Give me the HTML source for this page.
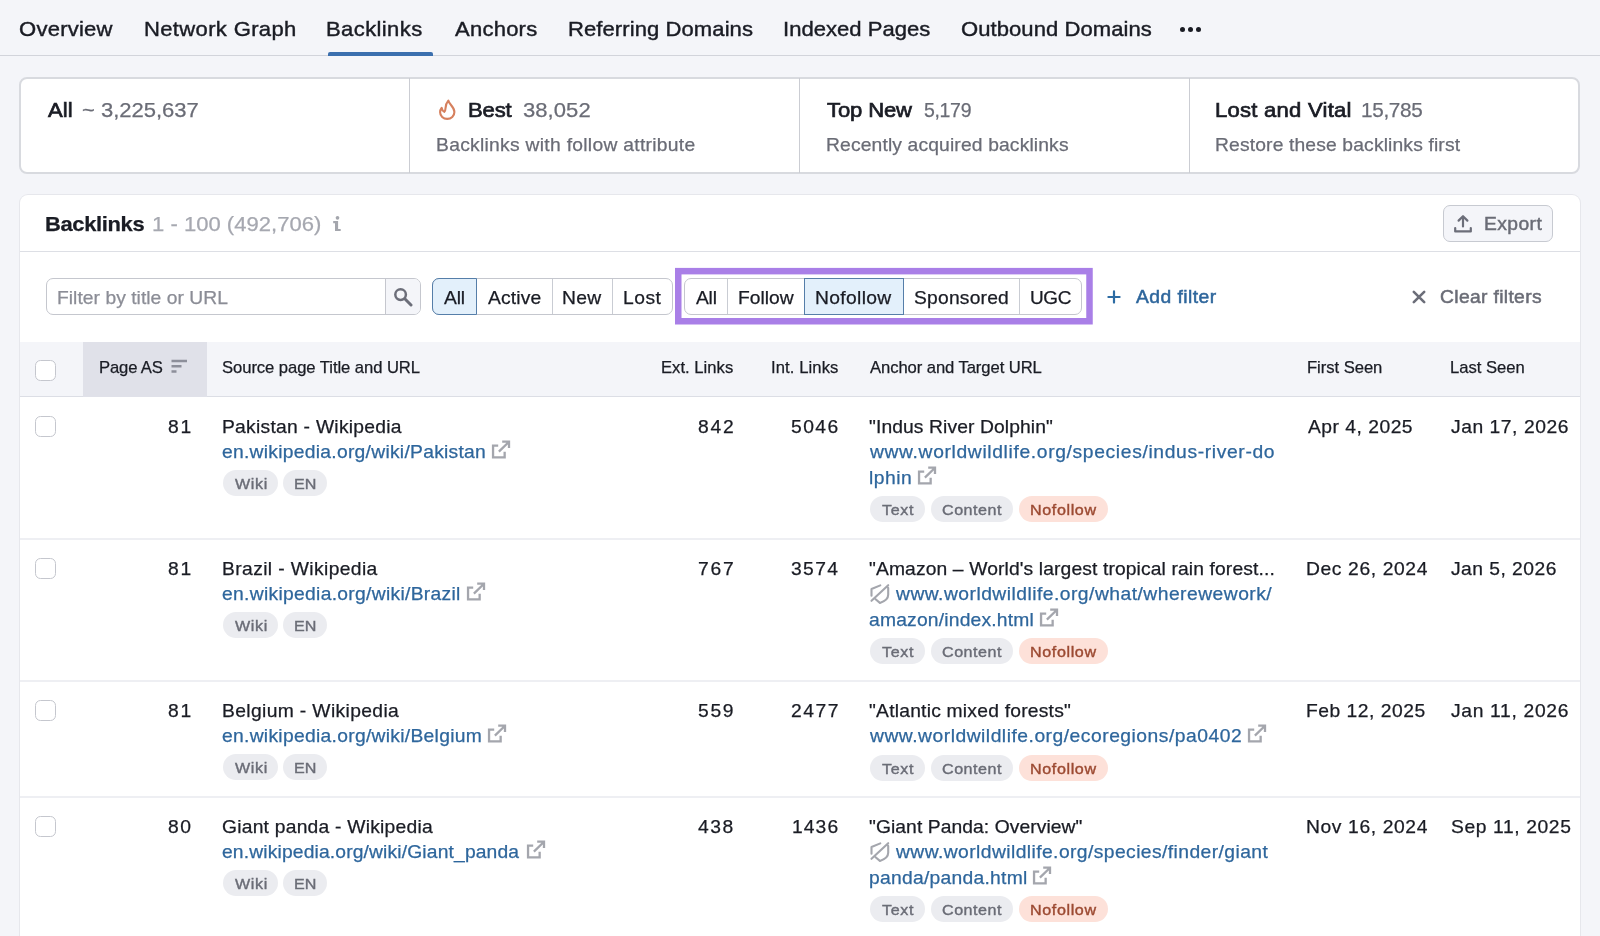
<!DOCTYPE html>
<html><head><meta charset="utf-8"><title>Backlinks</title>
<style>
html,body{margin:0;padding:0}
body{width:1600px;height:936px;overflow:hidden;background:#f4f5f9;font-family:"Liberation Sans",sans-serif;position:relative}
#root{position:absolute;left:0;top:0;width:1600px;height:936px;overflow:hidden;will-change:transform}
#root div,#root svg,#root span{position:absolute}
.t{white-space:pre;line-height:1;transform-origin:0 0}
</style></head><body><div id="root">
<div style="left:0;top:55px;width:1600px;height:1px;background:#d2d4db"></div>
<div style="left:327.5px;top:52px;width:105.5px;height:4px;background:#3b6fae;border-radius:2px 2px 0 0"></div>
<div style="left:1179.5px;top:26.5px;width:5px;height:5px;border-radius:50%;background:#1a1c24"></div>
<div style="left:1187.5px;top:26.5px;width:5px;height:5px;border-radius:50%;background:#1a1c24"></div>
<div style="left:1195.5px;top:26.5px;width:5px;height:5px;border-radius:50%;background:#1a1c24"></div>
<div style="left:19px;top:77px;width:1561px;height:97px;box-sizing:border-box;background:#fff;border:2px solid #d8dadf;border-radius:8px"></div>
<div style="left:409px;top:78px;width:1px;height:95px;background:#cbcdd3"></div>
<div style="left:799px;top:78px;width:1px;height:95px;background:#cbcdd3"></div>
<div style="left:1189px;top:78px;width:1px;height:95px;background:#cbcdd3"></div>
<svg style="left:437px;top:98px" width="22" height="24" viewBox="0 0 22 24" fill="none" stroke="#d6805e" stroke-width="2.1" stroke-linecap="round" stroke-linejoin="round"><path d="M11.300 2.600C12.200 6.400 17.400 8.800 17.400 14 17.400 18 14.200 20.900 10.200 20.900 6.200 20.900 3.100 18 3.100 14.200 3.100 12.400 3.700 10.900 4.600 9.800 5 11.800 5.900 13.300 7.300 13.900 9.800 12.200 6.800 7.600 11.300 2.600Z"/></svg>
<div style="left:20px;top:195px;width:1560px;height:760px;background:#fff;border-radius:8px;box-shadow:0 0 0 1px #e6e7ec"></div>
<div style="left:20px;top:251px;width:1560px;height:1px;background:#dddfe5"></div>
<svg style="left:330px;top:214px" width="14" height="20" viewBox="330 214 14 20" fill="#a4a6ad"><circle cx="337.500" cy="217.800" r="1.850"/><path d="M333.200 221.100h4.900v7.900h2.600v2.100h-5.700v-7.900h-1.800z"/></svg>
<div style="left:1443px;top:205px;width:110px;height:37px;box-sizing:border-box;background:#f4f5f9;border:1.5px solid #c7cad1;border-radius:7px"></div>
<svg style="left:1453px;top:214px" width="20" height="20" viewBox="0 0 20 20" fill="none" stroke="#6c6e79" stroke-width="2.2" stroke-linecap="round" stroke-linejoin="round"><path d="M10 12.500V2.600M5.600 6.600 10 2.200l4.400 4.400M2.200 14v3.400h15.600V14"/></svg>
<div style="left:45.500px;top:278px;width:375.500px;height:37px;box-sizing:border-box;background:#fff;border:1.5px solid #c5c7ce;border-radius:7px;overflow:hidden"><div style="left:338px;top:0;width:40px;height:40px;background:#f4f5f9;border-left:1.5px solid #c5c7ce"></div></div>
<svg style="left:393px;top:286.800px" width="20" height="20" viewBox="0 0 20 20" fill="none" stroke="#6c6e79" stroke-width="2.500" stroke-linecap="round"><circle cx="7.600" cy="7.600" r="5.300"/><path d="M11.800 11.800 18 18" stroke-width="3"/></svg>
<div style="left:432px;top:278px;width:240.5px;height:37px;box-sizing:border-box;background:#fff;border:1.5px solid #c5c7ce;border-radius:7px"></div>
<div style="left:552px;top:279px;width:1px;height:35px;background:#c9ccd3"></div>
<div style="left:612px;top:279px;width:1px;height:35px;background:#c9ccd3"></div>
<div style="left:432px;top:278px;width:44.5px;height:37px;box-sizing:border-box;background:#e3f0fb;border:1.5px solid #557ea9;border-radius:7px 0 0 7px"></div>
<svg style="left:670px;top:262px" width="430" height="70" viewBox="670 262 430 70" fill="none"><rect x="678.250" y="271.150" width="411.250" height="50.100" stroke="#a97fe7" stroke-width="6.500"/></svg>
<div style="left:683.7px;top:278px;width:398.79999999999995px;height:37px;box-sizing:border-box;background:#fff;border:1.5px solid #c5c7ce;border-radius:7px"></div>
<div style="left:727px;top:279px;width:1px;height:35px;background:#c9ccd3"></div>
<div style="left:1019px;top:279px;width:1px;height:35px;background:#c9ccd3"></div>
<div style="left:804.2px;top:278px;width:99.79999999999995px;height:37px;box-sizing:border-box;background:#e3f0fb;border:1.5px solid #557ea9;border-radius:0"></div>
<svg style="left:1106px;top:289px" width="16" height="16" viewBox="0 0 16 16" stroke="#2c6ba3" stroke-width="2.200" stroke-linecap="round"><path d="M8 2.400v11.200M2.400 8h11.200"/></svg>
<svg style="left:1411px;top:289px" width="16" height="16" viewBox="0 0 16 16" stroke="#6c6e79" stroke-width="2.600" stroke-linecap="round"><path d="M2.800 2.800l10.400 10.400M13.200 2.800l-10.400 10.400"/></svg>
<div style="left:20px;top:341.500px;width:1560px;height:55px;background:#f4f5f9;border-bottom:1.5px solid #dcdee5;box-sizing:border-box"></div>
<div style="left:83px;top:341.500px;width:124px;height:55px;background:#e0e1e9"></div>
<svg style="left:170px;top:358px" width="18" height="16" viewBox="0 0 18 16" stroke="#8d8f9a" stroke-width="2.500" stroke-linecap="butt"><path d="M1.500 3h15.500M1.500 8.200h10M1.500 13.400h5"/></svg>
<div style="left:35px;top:359.5px;width:21px;height:21px;box-sizing:border-box;background:#fff;border:1.500px solid #c5c7ce;border-radius:5.500px"></div>
<div style="left:35px;top:416px;width:21px;height:21px;box-sizing:border-box;background:#fff;border:1.500px solid #c5c7ce;border-radius:5.500px"></div>
<svg style="left:491px;top:438.90000000000003px" width="21" height="22" viewBox="0 0 21 22" fill="none" stroke="#a4a6ad" stroke-width="2.300" stroke-linejoin="miter"><path d="M7.200 6.550H2.050V18.450H13.650V12.700M11.200 2.700H18V9M18 2.700 7.900 12.600"/></svg>
<div style="left:222.5px;top:470.40000000000003px;width:55.0px;height:26px;border-radius:13px;background:#ebecf0"></div>
<div style="left:283.2px;top:470.40000000000003px;width:44.30000000000001px;height:26px;border-radius:13px;background:#ebecf0"></div>
<svg style="left:916.5px;top:464.90000000000003px" width="21" height="22" viewBox="0 0 21 22" fill="none" stroke="#a4a6ad" stroke-width="2.300" stroke-linejoin="miter"><path d="M7.200 6.550H2.050V18.450H13.650V12.700M11.200 2.700H18V9M18 2.700 7.900 12.600"/></svg>
<div style="left:870px;top:496.40000000000003px;width:54.5px;height:26px;border-radius:13px;background:#ebecf0"></div>
<div style="left:930.5px;top:496.40000000000003px;width:82.5px;height:26px;border-radius:13px;background:#ebecf0"></div>
<div style="left:1019px;top:496.40000000000003px;width:88.79999999999995px;height:26px;border-radius:13px;background:#fde1d9"></div>
<div style="left:20px;top:538px;width:1560px;height:2px;background:#eeeff3"></div>
<div style="left:35px;top:558px;width:21px;height:21px;box-sizing:border-box;background:#fff;border:1.500px solid #c5c7ce;border-radius:5.500px"></div>
<svg style="left:465.5px;top:580.9px" width="21" height="22" viewBox="0 0 21 22" fill="none" stroke="#a4a6ad" stroke-width="2.300" stroke-linejoin="miter"><path d="M7.200 6.550H2.050V18.450H13.650V12.700M11.200 2.700H18V9M18 2.700 7.900 12.600"/></svg>
<div style="left:222.5px;top:612.4px;width:55.0px;height:26px;border-radius:13px;background:#ebecf0"></div>
<div style="left:283.2px;top:612.4px;width:44.30000000000001px;height:26px;border-radius:13px;background:#ebecf0"></div>
<svg style="left:869px;top:582.9px" width="22" height="23" viewBox="0 0 22 23" fill="none" stroke="#a4a6ad" stroke-width="2.100" stroke-linecap="round" stroke-linejoin="round"><path d="M11.300 2.400 2.500 6V12.800M19.200 4.900V11.800C19.200 15.800 15 18.600 10.900 19.900L6.600 16.200M19.200 2.200 2.500 17.800"/></svg>
<svg style="left:1039px;top:606.9px" width="21" height="22" viewBox="0 0 21 22" fill="none" stroke="#a4a6ad" stroke-width="2.300" stroke-linejoin="miter"><path d="M7.200 6.550H2.050V18.450H13.650V12.700M11.200 2.700H18V9M18 2.700 7.900 12.600"/></svg>
<div style="left:870px;top:638.4px;width:54.5px;height:26px;border-radius:13px;background:#ebecf0"></div>
<div style="left:930.5px;top:638.4px;width:82.5px;height:26px;border-radius:13px;background:#ebecf0"></div>
<div style="left:1019px;top:638.4px;width:88.79999999999995px;height:26px;border-radius:13px;background:#fde1d9"></div>
<div style="left:20px;top:680px;width:1560px;height:2px;background:#eeeff3"></div>
<div style="left:35px;top:700px;width:21px;height:21px;box-sizing:border-box;background:#fff;border:1.500px solid #c5c7ce;border-radius:5.500px"></div>
<svg style="left:487px;top:722.9px" width="21" height="22" viewBox="0 0 21 22" fill="none" stroke="#a4a6ad" stroke-width="2.300" stroke-linejoin="miter"><path d="M7.200 6.550H2.050V18.450H13.650V12.700M11.200 2.700H18V9M18 2.700 7.900 12.600"/></svg>
<div style="left:222.5px;top:754.4px;width:55.0px;height:26px;border-radius:13px;background:#ebecf0"></div>
<div style="left:283.2px;top:754.4px;width:44.30000000000001px;height:26px;border-radius:13px;background:#ebecf0"></div>
<svg style="left:1247px;top:722.9px" width="21" height="22" viewBox="0 0 21 22" fill="none" stroke="#a4a6ad" stroke-width="2.300" stroke-linejoin="miter"><path d="M7.200 6.550H2.050V18.450H13.650V12.700M11.200 2.700H18V9M18 2.700 7.900 12.600"/></svg>
<div style="left:870px;top:754.9px;width:54.5px;height:26px;border-radius:13px;background:#ebecf0"></div>
<div style="left:930.5px;top:754.9px;width:82.5px;height:26px;border-radius:13px;background:#ebecf0"></div>
<div style="left:1019px;top:754.9px;width:88.79999999999995px;height:26px;border-radius:13px;background:#fde1d9"></div>
<div style="left:20px;top:796px;width:1560px;height:2px;background:#eeeff3"></div>
<div style="left:35px;top:816px;width:21px;height:21px;box-sizing:border-box;background:#fff;border:1.500px solid #c5c7ce;border-radius:5.500px"></div>
<svg style="left:525.5px;top:838.9px" width="21" height="22" viewBox="0 0 21 22" fill="none" stroke="#a4a6ad" stroke-width="2.300" stroke-linejoin="miter"><path d="M7.200 6.550H2.050V18.450H13.650V12.700M11.200 2.700H18V9M18 2.700 7.900 12.600"/></svg>
<div style="left:222.5px;top:870.4px;width:55.0px;height:26px;border-radius:13px;background:#ebecf0"></div>
<div style="left:283.2px;top:870.4px;width:44.30000000000001px;height:26px;border-radius:13px;background:#ebecf0"></div>
<svg style="left:869px;top:840.9px" width="22" height="23" viewBox="0 0 22 23" fill="none" stroke="#a4a6ad" stroke-width="2.100" stroke-linecap="round" stroke-linejoin="round"><path d="M11.300 2.400 2.500 6V12.800M19.200 4.900V11.800C19.200 15.800 15 18.600 10.900 19.900L6.600 16.200M19.200 2.200 2.500 17.800"/></svg>
<svg style="left:1032px;top:864.9px" width="21" height="22" viewBox="0 0 21 22" fill="none" stroke="#a4a6ad" stroke-width="2.300" stroke-linejoin="miter"><path d="M7.200 6.550H2.050V18.450H13.650V12.700M11.200 2.700H18V9M18 2.700 7.900 12.600"/></svg>
<div style="left:870px;top:896.4px;width:54.5px;height:26px;border-radius:13px;background:#ebecf0"></div>
<div style="left:930.5px;top:896.4px;width:82.5px;height:26px;border-radius:13px;background:#ebecf0"></div>
<div style="left:1019px;top:896.4px;width:88.79999999999995px;height:26px;border-radius:13px;background:#fde1d9"></div>
<span class="t" style="left:19.18px;top:19.39px;font-size:20.8px;color:#1a1c24;letter-spacing:0.225px;transform:scaleX(1.0600);-webkit-text-stroke:0.42px #1a1c24">Overview</span>
<span class="t" style="left:144.41px;top:19.39px;font-size:20.8px;color:#1a1c24;letter-spacing:0.318px;transform:scaleX(1.0600);-webkit-text-stroke:0.42px #1a1c24">Network Graph</span>
<span class="t" style="left:326.41px;top:19.39px;font-size:20.8px;color:#1a1c24;letter-spacing:0.359px;transform:scaleX(1.0600);-webkit-text-stroke:0.42px #1a1c24">Backlinks</span>
<span class="t" style="left:454.88px;top:19.39px;font-size:20.8px;color:#1a1c24;letter-spacing:0.208px;transform:scaleX(1.0600);-webkit-text-stroke:0.42px #1a1c24">Anchors</span>
<span class="t" style="left:567.81px;top:19.39px;font-size:20.8px;color:#1a1c24;letter-spacing:0.070px;transform:scaleX(1.0600);-webkit-text-stroke:0.42px #1a1c24">Referring Domains</span>
<span class="t" style="left:782.59px;top:19.39px;font-size:20.8px;color:#1a1c24;letter-spacing:0.023px;transform:scaleX(1.0600);-webkit-text-stroke:0.42px #1a1c24">Indexed Pages</span>
<span class="t" style="left:961.38px;top:19.39px;font-size:20.8px;color:#1a1c24;letter-spacing:0.053px;transform:scaleX(1.0600);-webkit-text-stroke:0.42px #1a1c24">Outbound Domains</span>
<span class="t" style="left:47.83px;top:100.39px;font-size:20.8px;color:#1a1c24;letter-spacing:0.124px;transform:scaleX(1.0600);-webkit-text-stroke:0.7px #1a1c24">All</span>
<span class="t" style="left:82.14px;top:100.39px;font-size:20.8px;color:#6a6c76;letter-spacing:-0.023px;transform:scaleX(1.0600);-webkit-text-stroke:0.25px #6a6c76">~ 3,225,637</span>
<span class="t" style="left:467.56px;top:100.39px;font-size:20.8px;color:#1a1c24;letter-spacing:-0.124px;transform:scaleX(1.0600);-webkit-text-stroke:0.7px #1a1c24">Best</span>
<span class="t" style="left:522.79px;top:100.39px;font-size:20.8px;color:#6a6c76;letter-spacing:0.049px;transform:scaleX(1.0600);-webkit-text-stroke:0.25px #6a6c76">38,052</span>
<span class="t" style="left:435.55px;top:135.59px;font-size:18.2px;color:#6a6c76;letter-spacing:0.265px;transform:scaleX(1.0600);-webkit-text-stroke:0.25px #6a6c76">Backlinks with follow attribute</span>
<span class="t" style="left:827.38px;top:100.39px;font-size:20.8px;color:#1a1c24;letter-spacing:-0.122px;transform:scaleX(1.0600);-webkit-text-stroke:0.7px #1a1c24">Top New</span>
<span class="t" style="left:924.34px;top:100.39px;font-size:20.8px;color:#6a6c76;letter-spacing:-0.350px;transform:scaleX(0.9373);-webkit-text-stroke:0.25px #6a6c76">5,179</span>
<span class="t" style="left:826.05px;top:135.59px;font-size:18.2px;color:#6a6c76;letter-spacing:0.129px;transform:scaleX(1.0600);-webkit-text-stroke:0.25px #6a6c76">Recently acquired backlinks</span>
<span class="t" style="left:1215.26px;top:100.39px;font-size:20.8px;color:#1a1c24;letter-spacing:0.236px;transform:scaleX(1.0600);-webkit-text-stroke:0.7px #1a1c24">Lost and Vital</span>
<span class="t" style="left:1360.54px;top:100.39px;font-size:20.8px;color:#6a6c76;letter-spacing:-0.350px;transform:scaleX(0.9975);-webkit-text-stroke:0.25px #6a6c76">15,785</span>
<span class="t" style="left:1215.25px;top:135.59px;font-size:18.2px;color:#6a6c76;letter-spacing:0.134px;transform:scaleX(1.0600);-webkit-text-stroke:0.25px #6a6c76">Restore these backlinks first</span>
<span class="t" style="left:44.66px;top:213.89px;font-size:20.8px;color:#1a1c24;letter-spacing:-0.350px;transform:scaleX(1.0560);font-weight:700;-webkit-text-stroke:0.25px #1a1c24">Backlinks</span>
<span class="t" style="left:152.45px;top:213.89px;font-size:20.8px;color:#a6a8b0;letter-spacing:0.009px;transform:scaleX(1.0600);-webkit-text-stroke:0.25px #a6a8b0">1 - 100 (492,706)</span>
<span class="t" style="left:1483.66px;top:215.09px;font-size:18.2px;color:#6a6c76;letter-spacing:0.380px;transform:scaleX(1.0600);-webkit-text-stroke:0.45px #6a6c76">Export</span>
<span class="t" style="left:56.55px;top:288.79px;font-size:18.2px;color:#8b8d96;letter-spacing:0.028px;transform:scaleX(1.0600);-webkit-text-stroke:0.25px #8b8d96">Filter by title or URL</span>
<span class="t" style="left:444.09px;top:288.79px;font-size:18.2px;color:#1a1c24;letter-spacing:-0.174px;transform:scaleX(1.0600);-webkit-text-stroke:0.25px #1a1c24">All</span>
<span class="t" style="left:487.59px;top:288.79px;font-size:18.2px;color:#1a1c24;letter-spacing:0.118px;transform:scaleX(1.0600);-webkit-text-stroke:0.25px #1a1c24">Active</span>
<span class="t" style="left:562.25px;top:288.79px;font-size:18.2px;color:#1a1c24;letter-spacing:0.234px;transform:scaleX(1.0600);-webkit-text-stroke:0.25px #1a1c24">New</span>
<span class="t" style="left:623.05px;top:288.79px;font-size:18.2px;color:#1a1c24;letter-spacing:0.473px;transform:scaleX(1.0600);-webkit-text-stroke:0.25px #1a1c24">Lost</span>
<span class="t" style="left:695.79px;top:288.79px;font-size:18.2px;color:#1a1c24;letter-spacing:-0.221px;transform:scaleX(1.0600);-webkit-text-stroke:0.25px #1a1c24">All</span>
<span class="t" style="left:737.65px;top:288.79px;font-size:18.2px;color:#1a1c24;letter-spacing:-0.028px;transform:scaleX(1.0600);-webkit-text-stroke:0.25px #1a1c24">Follow</span>
<span class="t" style="left:815.05px;top:288.79px;font-size:18.2px;color:#1a1c24;letter-spacing:0.315px;transform:scaleX(1.0600);-webkit-text-stroke:0.25px #1a1c24">Nofollow</span>
<span class="t" style="left:914.26px;top:288.79px;font-size:18.2px;color:#1a1c24;letter-spacing:0.188px;transform:scaleX(1.0600);-webkit-text-stroke:0.25px #1a1c24">Sponsored</span>
<span class="t" style="left:1029.67px;top:288.79px;font-size:18.2px;color:#1a1c24;letter-spacing:-0.350px;transform:scaleX(1.0429);-webkit-text-stroke:0.25px #1a1c24">UGC</span>
<span class="t" style="left:1135.53px;top:288.39px;font-size:18.2px;color:#2e669c;letter-spacing:0.423px;transform:scaleX(1.0600);-webkit-text-stroke:0.5px #2e669c">Add filter</span>
<span class="t" style="left:1439.89px;top:288.39px;font-size:18.2px;color:#6a6c76;letter-spacing:0.319px;transform:scaleX(1.0600);-webkit-text-stroke:0.5px #6a6c76">Clear filters</span>
<span class="t" style="left:98.77px;top:360.41px;font-size:15.7px;color:#1a1c24;letter-spacing:-0.136px;transform:scaleX(1.0600);-webkit-text-stroke:0.25px #1a1c24">Page AS</span>
<span class="t" style="left:222.38px;top:360.41px;font-size:15.7px;color:#1a1c24;letter-spacing:-0.064px;transform:scaleX(1.0600);-webkit-text-stroke:0.25px #1a1c24">Source page Title and URL</span>
<span class="t" style="left:661.27px;top:360.41px;font-size:15.7px;color:#1a1c24;letter-spacing:0.011px;transform:scaleX(1.0600);-webkit-text-stroke:0.25px #1a1c24">Ext. Links</span>
<span class="t" style="left:770.60px;top:360.41px;font-size:15.7px;color:#1a1c24;letter-spacing:0.086px;transform:scaleX(1.0600);-webkit-text-stroke:0.25px #1a1c24">Int. Links</span>
<span class="t" style="left:870.10px;top:360.41px;font-size:15.7px;color:#1a1c24;letter-spacing:-0.078px;transform:scaleX(1.0600);-webkit-text-stroke:0.25px #1a1c24">Anchor and Target URL</span>
<span class="t" style="left:1306.57px;top:360.41px;font-size:15.7px;color:#1a1c24;letter-spacing:-0.043px;transform:scaleX(1.0600);-webkit-text-stroke:0.25px #1a1c24">First Seen</span>
<span class="t" style="left:1450.27px;top:360.41px;font-size:15.7px;color:#1a1c24;letter-spacing:-0.025px;transform:scaleX(1.0600);-webkit-text-stroke:0.25px #1a1c24">Last Seen</span>
<span class="t" style="left:167.59px;top:417.69px;font-size:18.2px;color:#1a1c24;letter-spacing:1.667px;transform:scaleX(1.0600);-webkit-text-stroke:0.25px #1a1c24">81</span>
<span class="t" style="left:221.55px;top:417.69px;font-size:18.2px;color:#1a1c24;letter-spacing:0.242px;transform:scaleX(1.0600);-webkit-text-stroke:0.25px #1a1c24">Pakistan - Wikipedia</span>
<span class="t" style="left:222.31px;top:443.49px;font-size:18.2px;color:#2e669c;letter-spacing:0.251px;transform:scaleX(1.0600);-webkit-text-stroke:0.25px #2e669c">en.wikipedia.org/wiki/Pakistan</span>
<span class="t" style="left:234.64px;top:476.13px;font-size:15.2px;color:#6a6c76;letter-spacing:0.636px;transform:scaleX(1.0600);-webkit-text-stroke:0.4px #6a6c76">Wiki</span>
<span class="t" style="left:294.39px;top:476.13px;font-size:15.2px;color:#6a6c76;letter-spacing:0.034px;transform:scaleX(1.0600);-webkit-text-stroke:0.4px #6a6c76">EN</span>
<span class="t" style="left:697.79px;top:417.69px;font-size:18.2px;color:#1a1c24;letter-spacing:1.633px;transform:scaleX(1.0600);-webkit-text-stroke:0.25px #1a1c24">842</span>
<span class="t" style="left:790.76px;top:417.69px;font-size:18.2px;color:#1a1c24;letter-spacing:1.371px;transform:scaleX(1.0600);-webkit-text-stroke:0.25px #1a1c24">5046</span>
<span class="t" style="left:869.31px;top:417.69px;font-size:18.2px;color:#1a1c24;letter-spacing:0.091px;transform:scaleX(1.0600);-webkit-text-stroke:0.25px #1a1c24">"Indus River Dolphin"</span>
<span class="t" style="left:870.16px;top:443.49px;font-size:18.2px;color:#2e669c;letter-spacing:0.601px;transform:scaleX(1.0600);-webkit-text-stroke:0.25px #2e669c">www.worldwildlife.org/species/indus-river-do</span>
<span class="t" style="left:868.83px;top:469.49px;font-size:18.2px;color:#2e669c;letter-spacing:0.482px;transform:scaleX(1.0600);-webkit-text-stroke:0.25px #2e669c">lphin</span>
<span class="t" style="left:881.85px;top:502.13px;font-size:15.2px;color:#6a6c76;letter-spacing:0.637px;transform:scaleX(1.0600);-webkit-text-stroke:0.4px #6a6c76">Text</span>
<span class="t" style="left:941.89px;top:502.13px;font-size:15.2px;color:#6a6c76;letter-spacing:0.490px;transform:scaleX(1.0600);-webkit-text-stroke:0.4px #6a6c76">Content</span>
<span class="t" style="left:1029.59px;top:502.13px;font-size:15.2px;color:#9c4a32;letter-spacing:0.581px;transform:scaleX(1.0600);-webkit-text-stroke:0.4px #9c4a32">Nofollow</span>
<span class="t" style="left:1307.59px;top:417.69px;font-size:18.2px;color:#1a1c24;letter-spacing:0.462px;transform:scaleX(1.0600);-webkit-text-stroke:0.25px #1a1c24">Apr 4, 2025</span>
<span class="t" style="left:1451.33px;top:417.69px;font-size:18.2px;color:#1a1c24;letter-spacing:0.505px;transform:scaleX(1.0600);-webkit-text-stroke:0.25px #1a1c24">Jan 17, 2026</span>
<span class="t" style="left:167.59px;top:559.69px;font-size:18.2px;color:#1a1c24;letter-spacing:1.667px;transform:scaleX(1.0600);-webkit-text-stroke:0.25px #1a1c24">81</span>
<span class="t" style="left:221.55px;top:559.69px;font-size:18.2px;color:#1a1c24;letter-spacing:0.355px;transform:scaleX(1.0600);-webkit-text-stroke:0.25px #1a1c24">Brazil - Wikipedia</span>
<span class="t" style="left:222.31px;top:585.49px;font-size:18.2px;color:#2e669c;letter-spacing:0.279px;transform:scaleX(1.0600);-webkit-text-stroke:0.25px #2e669c">en.wikipedia.org/wiki/Brazil</span>
<span class="t" style="left:234.64px;top:618.13px;font-size:15.2px;color:#6a6c76;letter-spacing:0.636px;transform:scaleX(1.0600);-webkit-text-stroke:0.4px #6a6c76">Wiki</span>
<span class="t" style="left:294.39px;top:618.13px;font-size:15.2px;color:#6a6c76;letter-spacing:0.034px;transform:scaleX(1.0600);-webkit-text-stroke:0.4px #6a6c76">EN</span>
<span class="t" style="left:697.64px;top:559.69px;font-size:18.2px;color:#1a1c24;letter-spacing:1.704px;transform:scaleX(1.0600);-webkit-text-stroke:0.25px #1a1c24">767</span>
<span class="t" style="left:790.80px;top:559.69px;font-size:18.2px;color:#1a1c24;letter-spacing:1.270px;transform:scaleX(1.0600);-webkit-text-stroke:0.25px #1a1c24">3574</span>
<span class="t" style="left:869.31px;top:559.69px;font-size:18.2px;color:#1a1c24;letter-spacing:0.110px;transform:scaleX(1.0600);-webkit-text-stroke:0.25px #1a1c24">"Amazon – World's largest tropical rain forest...</span>
<span class="t" style="left:896.16px;top:585.49px;font-size:18.2px;color:#2e669c;letter-spacing:0.443px;transform:scaleX(1.0600);-webkit-text-stroke:0.25px #2e669c">www.worldwildlife.org/what/wherewework/</span>
<span class="t" style="left:869.31px;top:611.49px;font-size:18.2px;color:#2e669c;letter-spacing:0.179px;transform:scaleX(1.0600);-webkit-text-stroke:0.25px #2e669c">amazon/index.html</span>
<span class="t" style="left:881.85px;top:644.13px;font-size:15.2px;color:#6a6c76;letter-spacing:0.637px;transform:scaleX(1.0600);-webkit-text-stroke:0.4px #6a6c76">Text</span>
<span class="t" style="left:941.89px;top:644.13px;font-size:15.2px;color:#6a6c76;letter-spacing:0.490px;transform:scaleX(1.0600);-webkit-text-stroke:0.4px #6a6c76">Content</span>
<span class="t" style="left:1029.59px;top:644.13px;font-size:15.2px;color:#9c4a32;letter-spacing:0.581px;transform:scaleX(1.0600);-webkit-text-stroke:0.4px #9c4a32">Nofollow</span>
<span class="t" style="left:1306.05px;top:559.69px;font-size:18.2px;color:#1a1c24;letter-spacing:0.574px;transform:scaleX(1.0600);-webkit-text-stroke:0.25px #1a1c24">Dec 26, 2024</span>
<span class="t" style="left:1451.33px;top:559.69px;font-size:18.2px;color:#1a1c24;letter-spacing:0.436px;transform:scaleX(1.0600);-webkit-text-stroke:0.25px #1a1c24">Jan 5, 2026</span>
<span class="t" style="left:167.59px;top:701.69px;font-size:18.2px;color:#1a1c24;letter-spacing:1.667px;transform:scaleX(1.0600);-webkit-text-stroke:0.25px #1a1c24">81</span>
<span class="t" style="left:221.55px;top:701.69px;font-size:18.2px;color:#1a1c24;letter-spacing:0.338px;transform:scaleX(1.0600);-webkit-text-stroke:0.25px #1a1c24">Belgium - Wikipedia</span>
<span class="t" style="left:222.31px;top:727.49px;font-size:18.2px;color:#2e669c;letter-spacing:0.270px;transform:scaleX(1.0600);-webkit-text-stroke:0.25px #2e669c">en.wikipedia.org/wiki/Belgium</span>
<span class="t" style="left:234.64px;top:760.13px;font-size:15.2px;color:#6a6c76;letter-spacing:0.636px;transform:scaleX(1.0600);-webkit-text-stroke:0.4px #6a6c76">Wiki</span>
<span class="t" style="left:294.39px;top:760.13px;font-size:15.2px;color:#6a6c76;letter-spacing:0.034px;transform:scaleX(1.0600);-webkit-text-stroke:0.4px #6a6c76">EN</span>
<span class="t" style="left:697.86px;top:701.69px;font-size:18.2px;color:#1a1c24;letter-spacing:1.576px;transform:scaleX(1.0600);-webkit-text-stroke:0.25px #1a1c24">559</span>
<span class="t" style="left:790.56px;top:701.69px;font-size:18.2px;color:#1a1c24;letter-spacing:1.471px;transform:scaleX(1.0600);-webkit-text-stroke:0.25px #1a1c24">2477</span>
<span class="t" style="left:869.31px;top:701.69px;font-size:18.2px;color:#1a1c24;letter-spacing:0.204px;transform:scaleX(1.0600);-webkit-text-stroke:0.25px #1a1c24">"Atlantic mixed forests"</span>
<span class="t" style="left:870.16px;top:727.49px;font-size:18.2px;color:#2e669c;letter-spacing:0.474px;transform:scaleX(1.0600);-webkit-text-stroke:0.25px #2e669c">www.worldwildlife.org/ecoregions/pa0402</span>
<span class="t" style="left:881.85px;top:760.63px;font-size:15.2px;color:#6a6c76;letter-spacing:0.637px;transform:scaleX(1.0600);-webkit-text-stroke:0.4px #6a6c76">Text</span>
<span class="t" style="left:941.89px;top:760.63px;font-size:15.2px;color:#6a6c76;letter-spacing:0.490px;transform:scaleX(1.0600);-webkit-text-stroke:0.4px #6a6c76">Content</span>
<span class="t" style="left:1029.59px;top:760.63px;font-size:15.2px;color:#9c4a32;letter-spacing:0.581px;transform:scaleX(1.0600);-webkit-text-stroke:0.4px #9c4a32">Nofollow</span>
<span class="t" style="left:1306.05px;top:701.69px;font-size:18.2px;color:#1a1c24;letter-spacing:0.471px;transform:scaleX(1.0600);-webkit-text-stroke:0.25px #1a1c24">Feb 12, 2025</span>
<span class="t" style="left:1451.33px;top:701.69px;font-size:18.2px;color:#1a1c24;letter-spacing:0.628px;transform:scaleX(1.0600);-webkit-text-stroke:0.25px #1a1c24">Jan 11, 2026</span>
<span class="t" style="left:167.59px;top:817.69px;font-size:18.2px;color:#1a1c24;letter-spacing:1.489px;transform:scaleX(1.0600);-webkit-text-stroke:0.25px #1a1c24">80</span>
<span class="t" style="left:222.16px;top:817.69px;font-size:18.2px;color:#1a1c24;letter-spacing:0.212px;transform:scaleX(1.0600);-webkit-text-stroke:0.25px #1a1c24">Giant panda - Wikipedia</span>
<span class="t" style="left:222.31px;top:843.49px;font-size:18.2px;color:#2e669c;letter-spacing:0.132px;transform:scaleX(1.0600);-webkit-text-stroke:0.25px #2e669c">en.wikipedia.org/wiki/Giant_panda</span>
<span class="t" style="left:234.64px;top:876.13px;font-size:15.2px;color:#6a6c76;letter-spacing:0.636px;transform:scaleX(1.0600);-webkit-text-stroke:0.4px #6a6c76">Wiki</span>
<span class="t" style="left:294.39px;top:876.13px;font-size:15.2px;color:#6a6c76;letter-spacing:0.034px;transform:scaleX(1.0600);-webkit-text-stroke:0.4px #6a6c76">EN</span>
<span class="t" style="left:698.19px;top:817.69px;font-size:18.2px;color:#1a1c24;letter-spacing:1.385px;transform:scaleX(1.0600);-webkit-text-stroke:0.25px #1a1c24">438</span>
<span class="t" style="left:791.86px;top:817.69px;font-size:18.2px;color:#1a1c24;letter-spacing:1.024px;transform:scaleX(1.0600);-webkit-text-stroke:0.25px #1a1c24">1436</span>
<span class="t" style="left:869.31px;top:817.69px;font-size:18.2px;color:#1a1c24;letter-spacing:0.062px;transform:scaleX(1.0600);-webkit-text-stroke:0.25px #1a1c24">"Giant Panda: Overview"</span>
<span class="t" style="left:896.16px;top:843.49px;font-size:18.2px;color:#2e669c;letter-spacing:0.395px;transform:scaleX(1.0600);-webkit-text-stroke:0.25px #2e669c">www.worldwildlife.org/species/finder/giant</span>
<span class="t" style="left:868.89px;top:869.49px;font-size:18.2px;color:#2e669c;letter-spacing:0.246px;transform:scaleX(1.0600);-webkit-text-stroke:0.25px #2e669c">panda/panda.html</span>
<span class="t" style="left:881.85px;top:902.13px;font-size:15.2px;color:#6a6c76;letter-spacing:0.637px;transform:scaleX(1.0600);-webkit-text-stroke:0.4px #6a6c76">Text</span>
<span class="t" style="left:941.89px;top:902.13px;font-size:15.2px;color:#6a6c76;letter-spacing:0.490px;transform:scaleX(1.0600);-webkit-text-stroke:0.4px #6a6c76">Content</span>
<span class="t" style="left:1029.59px;top:902.13px;font-size:15.2px;color:#9c4a32;letter-spacing:0.581px;transform:scaleX(1.0600);-webkit-text-stroke:0.4px #9c4a32">Nofollow</span>
<span class="t" style="left:1306.05px;top:817.69px;font-size:18.2px;color:#1a1c24;letter-spacing:0.574px;transform:scaleX(1.0600);-webkit-text-stroke:0.25px #1a1c24">Nov 16, 2024</span>
<span class="t" style="left:1450.76px;top:817.69px;font-size:18.2px;color:#1a1c24;letter-spacing:0.569px;transform:scaleX(1.0600);-webkit-text-stroke:0.25px #1a1c24">Sep 11, 2025</span>
</div></body></html>
